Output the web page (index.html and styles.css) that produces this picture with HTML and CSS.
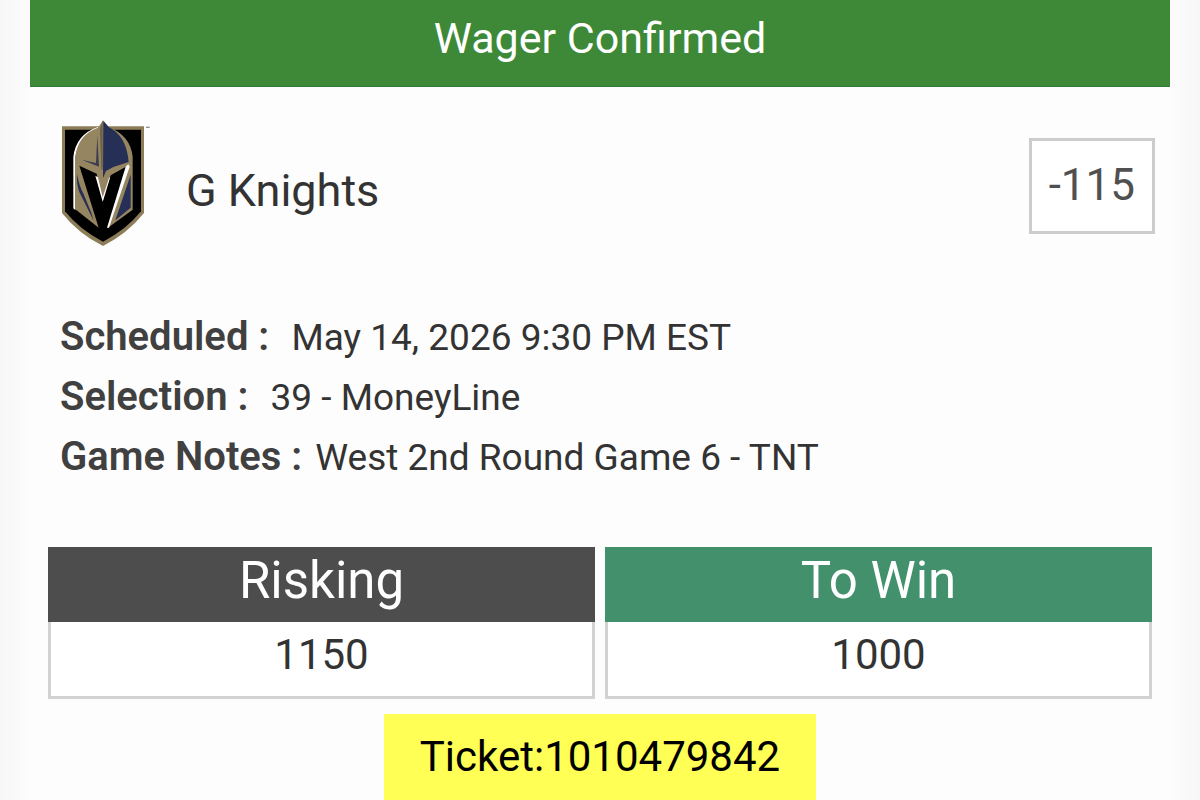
FILE: index.html
```html
<!DOCTYPE html>
<html lang="en">
<head>
  <meta charset="UTF-8">
  <meta name="viewport" content="width=device-width, initial-scale=1.0">
  <title>Wager Confirmed</title>
  <link rel="stylesheet" href="styles.css">
</head>
<body>
  <main class="ticket">
    <h1 class="ticket-header">Wager Confirmed</h1>

    <section class="team">
      <svg class="team-logo" viewBox="36 26 264 384" role="img" aria-label="Golden Knights logo">
        <!-- shield -->
        <path fill="#8c7d58" d="M36 48H282V308Q231 371 159 407Q86 371 36 308Z"/>
        <path fill="#000" d="M45 58H273V303Q228 359 159 394Q90 359 45 303Z"/>
        <!-- helmet -->
        <path fill="#fff" d="M144 50Q78 72 70 140V294L76 300V142Q86 76 146 54Z"/>
        <path fill="#958560" d="M159 30L176 50Q242 76 248 140V298L174 352L159 272L146 352L75 296V142Q84 72 144 52Z"/>
        <path fill="#000" d="M88 166L140 190L159 272L182 195L236 165L174 352H146Z"/>
        <path fill="#fff" d="M136 196L147 202L159 232L173 200L180 202L158 274Z"/>
        <path fill="#958560" d="M143 196L159 186L178 200L158 261Z"/>
        <path fill="#fff" d="M227 169L235 162L239 169L177 352H171Z"/>
        <path fill="#262f55" d="M160 32L176 50Q229 76 236 155L190 170L168 182L159 203Z"/>
        <path fill="#262f55" d="M242 193V292L196 330Z"/>
        <path fill="#262f55" d="M81 192Q79 220 88 245L131 331L124 307L101 252Q88 229 81 192Z"/>
        <path fill="#3c3d50" d="M142 75L147 169L95 148L138 158Z"/>
        <path fill="#6c6049" d="M158 31V178H154L150 56Z"/>
        <path fill="#8c8c99" d="M288 49H299V53H288Z"/>
      </svg>
      <h2 class="team-name">G Knights</h2>
      <span class="odds">-115</span>
    </section>

    <dl class="details">
      <div class="detail">
        <dt>Scheduled :</dt>
        <dd>&nbsp;May 14, 2026 9:30 PM EST</dd>
      </div>
      <div class="detail">
        <dt>Selection :</dt>
        <dd>&nbsp;39 - MoneyLine</dd>
      </div>
      <div class="detail">
        <dt>Game Notes :</dt>
        <dd>West 2nd Round Game 6 - TNT</dd>
      </div>
    </dl>

    <section class="amounts">
      <div class="amount">
        <h3 class="amount-title">Risking</h3>
        <p class="amount-value">1150</p>
      </div>
      <div class="amount">
        <h3 class="amount-title win">To Win</h3>
        <p class="amount-value">1000</p>
      </div>
    </section>

    <p class="ticket-number">Ticket:1010479842</p>
  </main>
</body>
</html>
```
FILE: styles.css
```css
* {
  box-sizing: border-box;
}
body {
  margin: 0;
  font-family: Roboto, "Liberation Sans", sans-serif;
  color: #333;
  background: linear-gradient(to right, #f7f7f7, #fcfcfc 30px, #fcfcfc calc(100% - 30px), #f7f7f7);
}
h1, h2, h3, p, dl, dd {
  margin: 0;
  font-weight: normal;
}
.ticket {
  display: flex;
  flex-direction: column;
  margin: 0 30px;
  background-color: #fdfdfd;
}
.ticket-header {
  padding: 13px 0 23px;
  font-size: 43px;
  line-height: 50px;
  text-align: center;
  color: #fff;
  background-color: #3d8937;
  border-bottom: 1px solid #2f7a35;
}
.team {
  display: flex;
  align-items: center;
  padding: 32px 15px 0 32px;
}
.team-logo {
  width: 88px;
  height: 128px;
}
.team-name {
  flex: 1;
  padding: 16px 0 0 36px;
  font-size: 45px;
  line-height: 52px;
}
.odds {
  margin-top: 6px;
  padding: 18px 17px 20px;
  font-size: 44px;
  line-height: 52px;
  color: #505050;
  background-color: #fff;
  border: 3px solid #ccc;
}
.details {
  padding: 60px 30px;
}
.detail {
  display: flex;
  align-items: baseline;
  gap: 13px;
}
.detail dt {
  font-size: 40px;
  font-weight: 600;
  line-height: 60px;
  color: #404040;
}
.detail dd {
  font-size: 37px;
  line-height: 50px;
}
.amounts {
  display: grid;
  grid-template-columns: 1fr 1fr;
  gap: 10px;
  padding: 0 18px;
}
.amount {
  text-align: center;
}
.amount-title {
  padding: 4px 0 11px;
  font-size: 51px;
  line-height: 60px;
  color: #fff;
  background-color: #4d4d4d;
}
.amount-title.win {
  background-color: #43906c;
}
.amount-value {
  padding: 8px 0 16px;
  font-size: 42px;
  line-height: 50px;
  background-color: #fff;
  border: 3px solid #d2d2d2;
  border-top: none;
}
.ticket-number {
  align-self: center;
  margin-top: 15px;
  padding: 18px 36px;
  font-size: 42px;
  line-height: 50px;
  color: #000;
  background-color: #ffff55;
}
```
